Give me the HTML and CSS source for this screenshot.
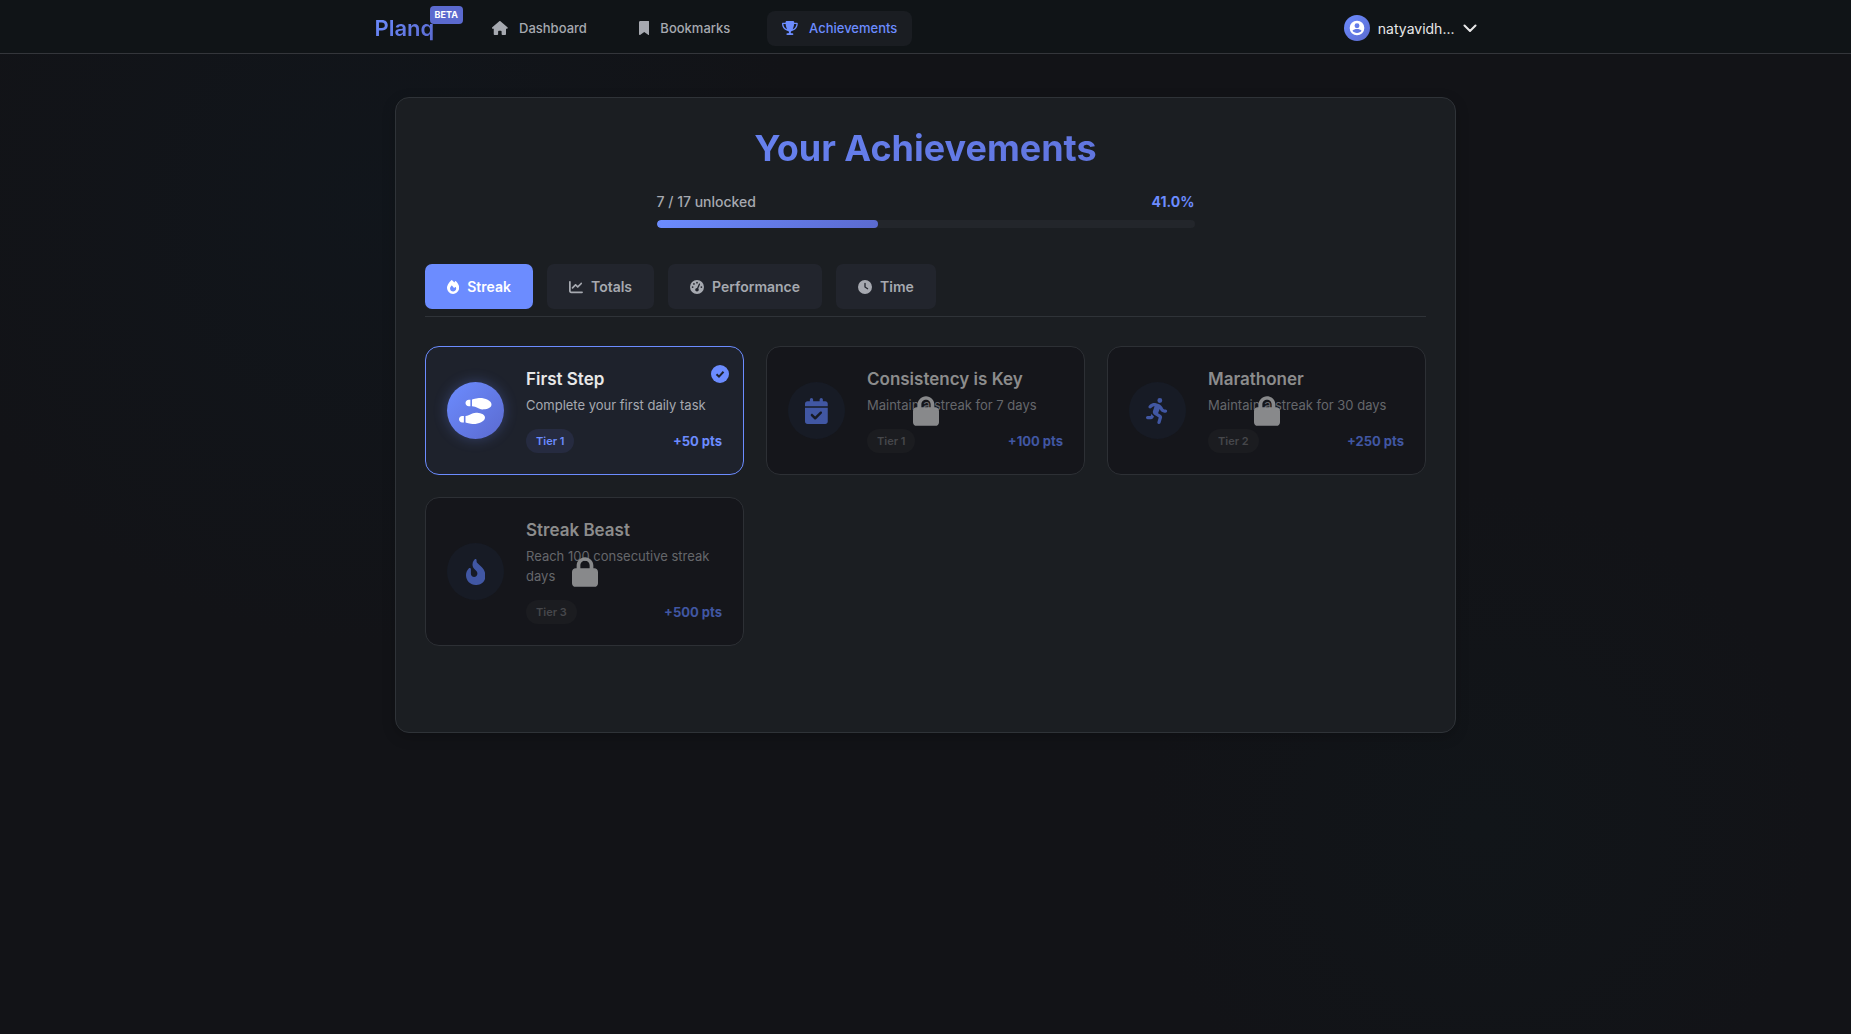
FILE: index.html
```html
<!DOCTYPE html>
<html lang="en">
<head>
<meta charset="utf-8">
<meta name="viewport" content="width=device-width, initial-scale=1">
<title>Planq – Achievements</title>
<link rel="stylesheet" href="styles.css">
</head>
<body>
<svg class="sprite" aria-hidden="true">
  <symbol id="lock" viewBox="0 0 448 512"><path d="M144 144v48H304V144c0-44.2-35.8-80-80-80s-80 35.8-80 80zM80 192V144C80 64.5 144.5 0 224 0s144 64.5 144 144v48h16c35.3 0 64 28.7 64 64V448c0 35.3-28.7 64-64 64H64c-35.3 0-64-28.7-64-64V256c0-35.3 28.7-64 64-64H80z"/></symbol>
</svg>

<header class="topbar">
  <div class="topbar-inner">
    <a class="logo" href="#"><span class="logo-text">Planq</span><span class="beta">BETA</span></a>
    <nav class="nav" aria-label="Main">
      <a class="nav-link" href="#">
        <svg class="icon" viewBox="0 0 576 512" aria-hidden="true"><path d="M575.8 255.5c0 18-15 32.1-32 32.1h-32l.7 160.2c0 2.7-.2 5.4-.5 8.1V472c0 22.1-17.9 40-40 40H456c-1.1 0-2.2 0-3.3-.1c-1.4 .1-2.8 .1-4.2 .1H416 392c-22.1 0-40-17.9-40-40V448 384c0-17.7-14.3-32-32-32H256c-17.7 0-32 14.3-32 32v64 24c0 22.1-17.9 40-40 40H160 128.1c-1.5 0-3-.1-4.5-.2c-1.2 .1-2.4 .2-3.6 .2H104c-22.1 0-40-17.9-40-40V360c0-.9 0-1.9 .1-2.8V287.6H32c-18 0-32-14-32-32.1c0-9 3-17 10-24L266.4 8c7-7 15-8 22-8s15 2 21 7L564.8 231.5c8 7 12 15 11 24z"/></svg>
        Dashboard
      </a>
      <a class="nav-link" href="#">
        <svg class="icon" viewBox="0 0 384 512" aria-hidden="true"><path d="M0 48V487.7C0 501.1 10.9 512 24.3 512c5 0 9.9-1.5 14-4.4L192 400 345.7 507.6c4.1 2.9 9 4.4 14 4.4c13.4 0 24.3-10.9 24.3-24.3V48c0-26.5-21.5-48-48-48H48C21.5 0 0 21.5 0 48z"/></svg>
        Bookmarks
      </a>
      <a class="nav-link is-active" href="#" aria-current="page">
        <svg class="icon" viewBox="0 0 576 512" aria-hidden="true"><path d="M400 0H176c-26.5 0-48.1 21.8-47.1 48.2c.2 5.3 .4 10.6 .7 15.8H24C10.7 64 0 74.7 0 88c0 92.6 33.5 157 78.5 200.7c44.3 43.1 98.3 64.8 138.1 75.8c23.4 6.5 39.4 26 39.4 45.6c0 20.9-17 37.9-37.9 37.9H192c-17.7 0-32 14.3-32 32s14.3 32 32 32H384c17.7 0 32-14.3 32-32s-14.3-32-32-32H357.9C337 448 320 431 320 410.1c0-19.6 15.9-39.2 39.4-45.6c39.9-11 93.9-32.7 138.2-75.8C542.5 245 576 180.6 576 88c0-13.3-10.7-24-24-24H446.4c.3-5.2 .5-10.4 .7-15.8C448.1 21.8 426.5 0 400 0zM48.9 112h84.4c9.1 90.1 29.2 150.3 51.9 190.6c-24.9-11-50.8-26.5-73.2-48.3c-32-31.1-58-76-63-142.3zM464.1 254.3c-22.4 21.8-48.3 37.3-73.2 48.3c22.7-40.3 42.8-100.5 51.9-190.6h84.4c-5.1 66.3-31.1 111.2-63 142.3z"/></svg>
        Achievements
      </a>
    </nav>
    <button class="user" type="button" aria-haspopup="menu">
      <span class="avatar">
        <svg viewBox="0 0 24 24" aria-hidden="true"><path fill-rule="evenodd" d="M12 1a11 11 0 1 0 0 22a11 11 0 1 0 0-22zM12 5a3.7 3.7 0 1 1 0 7.4a3.7 3.7 0 1 1 0-7.4zM12 19.5c-3 0-5.400-1.3-6.8-3.3c1-1.8 4.3-2.7 6.8-2.7s5.8.9 6.8 2.7c-1.4 2-3.8 3.3-6.8 3.3z"/></svg>
      </span>
      natyavidh...
      <svg class="chevron" viewBox="0 0 14 8" aria-hidden="true"><path d="M1.5 1.5l5.5 5.5 5.5-5.5"/></svg>
    </button>
  </div>
</header>

<main class="panel">
  <h1 class="title"><span class="title-text">Your Achievements</span></h1>

  <section class="progress" aria-label="Progress">
    <div class="progress-head"><span>7 / 17 unlocked</span><strong>41.0%</strong></div>
    <div class="progress-track"><div class="progress-fill" style="width: 41.2%"></div></div>
  </section>

  <div class="tabs" role="tablist">
    <button class="tab is-active" type="button" role="tab" aria-selected="true">
      <svg class="icon" viewBox="0 0 448 512" aria-hidden="true"><path d="M159.3 5.4c7.8-7.3 19.9-7.2 27.7 .1c27.6 25.9 53.5 53.8 77.7 84c11-14.4 23.5-30.1 37-42.9c7.9-7.4 20.1-7.4 28 .1c34.6 33 63.9 76.6 84.5 118c20.3 40.8 33.8 82.5 33.8 111.9C448 404.2 348.2 512 224 512C98.4 512 0 404.1 0 276.5c0-38.4 17.8-85.3 45.4-131.7C73.3 97.7 112.7 48.6 159.3 5.4zM225.7 416c25.3 0 47.7-7 68.8-21c42.1-29.4 53.4-88.2 28.1-134.4c-4.5-9-16-9.6-22.5-2l-25.2 29.3c-6.6 7.6-18.5 7.4-24.7-.5c-16.5-21-46-58.5-62.8-79.8c-6.3-8-18.3-8.1-24.7-.1c-33.8 42.5-50.8 69.3-50.8 99.4C112 375.4 162.6 416 225.7 416z"/></svg>
      Streak
    </button>
    <button class="tab" type="button" role="tab" aria-selected="false">
      <svg class="icon" viewBox="0 0 512 512" aria-hidden="true"><path d="M64 64c0-17.7-14.3-32-32-32S0 46.3 0 64V400c0 44.2 35.8 80 80 80H480c17.7 0 32-14.3 32-32s-14.3-32-32-32H80c-8.8 0-16-7.2-16-16V64zm406.6 86.6c12.5-12.5 12.5-32.8 0-45.3s-32.8-12.5-45.3 0L320 210.7l-57.4-57.4c-12.5-12.5-32.8-12.5-45.3 0l-112 112c-12.5 12.5-12.5 32.8 0 45.3s32.8 12.5 45.3 0L240 221.3l57.4 57.4c12.5 12.5 32.8 12.5 45.3 0l128-128z"/></svg>
      Totals
    </button>
    <button class="tab" type="button" role="tab" aria-selected="false">
      <svg class="icon" viewBox="0 0 512 512" aria-hidden="true"><path d="M0 256a256 256 0 1 1 512 0A256 256 0 1 1 0 256zM288 96a32 32 0 1 0 -64 0 32 32 0 1 0 64 0zM256 416c35.3 0 64-28.7 64-64c0-17.4-6.9-33.1-18.1-44.6L366 161.7c5.3-12.1-.2-26.3-12.3-31.6s-26.3 .2-31.6 12.3L257.9 288c-.6 0-1.3 0-1.9 0c-35.3 0-64 28.7-64 64s28.7 64 64 64zM176 144a32 32 0 1 0 -64 0 32 32 0 1 0 64 0zM96 288a32 32 0 1 0 0-64 32 32 0 1 0 0 64zm352-32a32 32 0 1 0 -64 0 32 32 0 1 0 64 0z"/></svg>
      Performance
    </button>
    <button class="tab" type="button" role="tab" aria-selected="false">
      <svg class="icon" viewBox="0 0 512 512" aria-hidden="true"><path d="M256 0a256 256 0 1 1 0 512A256 256 0 1 1 256 0zM232 120V256c0 8 4 15.5 10.7 20l96 64c11 7.4 25.9 4.4 33.3-6.7s4.4-25.9-6.7-33.3L280 243.2V120c0-13.3-10.7-24-24-24s-24 10.7-24 24z"/></svg>
      Time
    </button>
  </div>

  <div class="grid">
    <article class="card is-unlocked">
      <div class="badge"><svg class="icon" viewBox="0 0 640 512" aria-hidden="true"><path d="M416 0C352.3 0 256 32 256 32V160c48 0 76 16 104 32s56 32 104 32c56.4 0 176-16 176-96S512 0 416 0zM128 96c0 35.3 28.7 64 64 64h32V32H192c-35.3 0-64 28.7-64 64zM288 512c96 0 224-48 224-128s-119.6-96-176-96c-48 0-76 16-104 32s-56 32-104 32V480s96.3 32 160 32zM0 416c0 35.3 28.7 64 64 64H96V352H64c-35.3 0-64 28.7-64 64z"/></svg></div>
      <div class="body">
        <h2 class="name">First Step</h2>
        <p class="desc">Complete your first daily task</p>
        <div class="meta"><span class="tier">Tier 1</span><span class="points">+50 pts</span></div>
      </div>
      <svg class="done" viewBox="0 0 18 18" role="img" aria-label="Unlocked"><circle cx="9" cy="9" r="9"/><path d="M5.5 9.2l2.5 2.4 4.5-4.8"/></svg>
    </article>

    <article class="card">
      <div class="badge"><svg class="icon" viewBox="0 0 448 512" aria-hidden="true"><path d="M128 0c17.7 0 32 14.3 32 32V64H288V32c0-17.7 14.3-32 32-32s32 14.3 32 32V64h48c26.5 0 48 21.5 48 48v48H0V112C0 85.5 21.5 64 48 64H96V32c0-17.7 14.3-32 32-32zM0 192H448V464c0 26.5-21.5 48-48 48H48c-26.5 0-48-21.5-48-48V192zM329 305c9.4-9.4 9.4-24.6 0-33.9s-24.6-9.4-33.9 0l-95 95-47-47c-9.4-9.4-24.6-9.4-33.9 0s-9.4 24.6 0 33.9l64 64c9.4 9.4 24.6 9.4 33.9 0L329 305z"/></svg></div>
      <div class="body">
        <h2 class="name">Consistency is Key</h2>
        <p class="desc">Maintain a streak for 7 days</p>
        <div class="meta"><span class="tier">Tier 1</span><span class="points">+100 pts</span></div>
      </div>
      <div class="overlay"><svg class="lock" role="img" aria-label="Locked"><use href="#lock"/></svg></div>
    </article>

    <article class="card">
      <div class="badge"><svg class="icon" viewBox="0 0 448 512" aria-hidden="true"><path d="M320 48a48 48 0 1 0 -96 0 48 48 0 1 0 96 0zM125.7 175.5c9.9-9.9 23.4-15.5 37.5-15.5c1.9 0 3.8 .1 5.6 .3L137.6 254c-9.3 28 1.7 58.8 26.8 74.5l86.2 53.9-25.4 88.8c-4.9 17 5 34.7 22 39.6s34.7-5 39.6-22l28.7-100.4c5.9-20.6-2.6-42.6-20.7-53.9L238 299l30.9-82.4 5.1 12.3C289 264.7 323.9 288 362.7 288H384c17.7 0 32-14.3 32-32s-14.3-32-32-32H362.7c-12.9 0-24.6-7.8-29.5-19.7l-6.3-15c-14.6-35.1-44.1-61.9-80.5-73.1l-48.7-15c-11.1-3.4-22.7-5.2-34.4-5.2c-31 0-60.8 12.3-82.7 34.3L57.4 153.4c-12.5 12.5-12.5 32.8 0 45.3s32.8 12.5 45.3 0l23.1-23.1zM91.2 352H32c-17.7 0-32 14.3-32 32s14.3 32 32 32h69.6c19 0 36.2-11.2 43.9-28.5L157 361.6l-9.5-6c-17.5-10.9-30.5-26.8-37.9-44.9L91.2 352z"/></svg></div>
      <div class="body">
        <h2 class="name">Marathoner</h2>
        <p class="desc">Maintain a streak for 30 days</p>
        <div class="meta"><span class="tier">Tier 2</span><span class="points">+250 pts</span></div>
      </div>
      <div class="overlay"><svg class="lock" role="img" aria-label="Locked"><use href="#lock"/></svg></div>
    </article>

    <article class="card">
      <div class="badge"><svg class="icon" viewBox="0 0 384 512" aria-hidden="true"><path d="M153.6 29.9l16-21.3C173.6 3.2 180 0 186.7 0C198.4 0 208 9.6 208 21.3V43.5c0 13.1 5.4 25.7 14.9 34.7L307.6 159C356.4 205.6 384 270.2 384 337.7C384 434 306 512 209.7 512H192C86 512 0 426 0 320v-3.8c0-48.8 19.4-95.6 53.9-130.1l3.5-3.5c4.2-4.2 10-6.6 16-6.6C85.9 176 96 186.1 96 198.6V288c0 35.3 28.7 64 64 64s64-28.7 64-64v-3.9c0-18-7.2-35.3-19.9-48l-38.6-38.6c-24-24-37.5-56.7-37.5-90.7c0-27.7 9-54.8 25.6-76.9z"/></svg></div>
      <div class="body">
        <h2 class="name">Streak Beast</h2>
        <p class="desc">Reach 100 consecutive streak days</p>
        <div class="meta"><span class="tier">Tier 3</span><span class="points">+500 pts</span></div>
      </div>
      <div class="overlay"><svg class="lock" role="img" aria-label="Locked"><use href="#lock"/></svg></div>
    </article>
  </div>
</main>
</body>
</html>
```
FILE: styles.css
```css
:root {
  --accent: #6c8cff;
  --accent-deep: #5b6acf;
  --gradient: linear-gradient(135deg, var(--accent), var(--accent-deep));
  --text: #e8e8e8;
  --muted: #a6a9b0;
  --panel: #1b1e22;
  --line: #2f3338;
}

* { box-sizing: border-box; }

body {
  margin: 0;
  min-height: 100vh;
  background:
    radial-gradient(circle at 20% 20%, rgba(16, 23, 30, 0.6), transparent 440px),
    radial-gradient(circle at 80% 80%, rgba(16, 23, 27, 0.5), transparent 340px),
    #121317;
  color: var(--text);
  font-family: Inter, "Liberation Sans", sans-serif;
  font-size: 14px;
}

h1, h2, p { margin: 0; }
button { font: inherit; border: 0; cursor: pointer; }
a { text-decoration: none; }
.sprite { display: none; }
.icon { height: 14px; fill: currentColor; flex: none; }

/* Top bar */
.topbar {
  background: #101417;
  border-bottom: 1px solid #34363b;
}
.topbar-inner {
  display: flex;
  align-items: center;
  max-width: 1102px;
  height: 53px;
  margin: 0 auto;
  padding-top: 3px;
}
.logo {
  position: relative;
  margin-right: 43px;
  font-size: 22px;
  font-weight: 600;
  line-height: 28px;
}
.logo-text,
.title-text {
  background: var(--gradient);
  -webkit-background-clip: text;
  background-clip: text;
  color: transparent;
}
.title-text { display: block; }
.beta {
  position: absolute;
  left: 55px;
  top: -8px;
  padding: 0 5px;
  border-radius: 4px;
  background: var(--accent-deep);
  color: #fff;
  font-size: 9px;
  font-weight: 700;
  line-height: 18px;
}
.nav { display: flex; gap: 22px; }
.nav-link {
  display: flex;
  align-items: center;
  gap: 11px;
  height: 35px;
  padding: 0 15px;
  border-radius: 8px;
  color: var(--muted);
  font-size: 13px;
  font-weight: 500;
}
.nav-link.is-active { background: #1a1d22; color: var(--accent); }
.user {
  display: flex;
  align-items: center;
  gap: 8px;
  margin-left: auto;
  padding: 0;
  background: none;
  color: var(--text);
}
.avatar {
  display: grid;
  place-items: center;
  width: 26px;
  height: 26px;
  border-radius: 50%;
  background: var(--gradient);
}
.avatar svg { width: 16px; height: 16px; fill: #fff; }
.chevron {
  width: 14px;
  height: 8px;
  fill: none;
  stroke: currentColor;
  stroke-width: 2;
  stroke-linecap: round;
  stroke-linejoin: round;
}

/* Panel */
.panel {
  max-width: 1061px;
  min-height: 636px;
  margin: 43px auto 0;
  padding: 28px 29px;
  border: 1px solid var(--line);
  border-radius: 14px;
  background: var(--panel);
  box-shadow: 0 4px 14px rgba(0, 0, 0, 0.2);
}
.title {
  font-size: 36px;
  font-weight: 700;
  line-height: 44px;
  text-align: center;
}
.progress { max-width: 538px; margin: 22px auto 36px; }
.progress-head {
  display: flex;
  justify-content: space-between;
  margin-bottom: 8px;
  color: var(--muted);
  line-height: 20px;
  font-weight: 500;
}
.progress-head strong { color: var(--accent); font-weight: 700; }
.progress-track {
  height: 8px;
  border-radius: 4px;
  background: #23262b;
  overflow: hidden;
}
.progress-fill { height: 100%; border-radius: 4px; background: var(--gradient); }

.tabs {
  display: flex;
  gap: 14px;
  padding-bottom: 7px;
  border-bottom: 1px solid var(--line);
}
.tab {
  display: flex;
  align-items: center;
  gap: 8px;
  height: 45px;
  padding: 0 22px;
  border-radius: 7px;
  background: #22252d;
  color: var(--muted);
  font-weight: 600;
}
.tab.is-active { background: var(--accent); color: #fff; }

/* Cards */
.grid {
  display: grid;
  grid-template-columns: repeat(3, 1fr);
  gap: 22px;
  margin-top: 29px;
}
.card {
  position: relative;
  display: flex;
  align-items: center;
  gap: 22px;
  padding: 21px;
  border: 1px solid #2d3035;
  border-radius: 14px;
  background: #15161b;
}
.card.is-unlocked { border-color: var(--accent); background: #1e222c; }
.badge {
  display: grid;
  place-items: center;
  flex: none;
  width: 57px;
  height: 57px;
  border-radius: 50%;
  background: #171b25;
  color: #4157a3;
}
.badge .icon { height: 26px; }
.is-unlocked .badge {
  background: var(--gradient);
  color: #fff;
  box-shadow: 0 0 14px rgba(108, 140, 255, 0.3);
}
.body { flex: 1; min-width: 0; }
.name { color: #8c8c8c; font-size: 17px; font-weight: 600; line-height: 22px; }
.desc { margin: 5px 0 14px; color: #65676b; font-size: 13px; line-height: 20px; }
.is-unlocked .name { color: var(--text); }
.is-unlocked .desc { color: var(--muted); }
.meta { display: flex; align-items: center; justify-content: space-between; }
.tier {
  padding: 0 10px;
  border-radius: 12px;
  background: #1b1c20;
  color: #46474b;
  font-size: 11px;
  font-weight: 600;
  line-height: 24px;
}
.is-unlocked .tier { background: #262b40; color: var(--accent); }
.points { color: #4157a3; font-size: 13px; font-weight: 700; }
.is-unlocked .points { color: var(--accent); }
.done { position: absolute; top: 18px; right: 14px; width: 18px; height: 18px; }
.done circle { fill: var(--accent); }
.done path { fill: none; stroke: #1e222c; stroke-width: 2; }
.overlay {
  position: absolute;
  inset: 0;
  display: grid;
  place-items: center;
}
.lock { width: 26px; height: 30px; fill: #8f9092; opacity: 0.95; }

@media (max-width: 1100px) {
  .topbar-inner { padding: 3px 16px 0; }
  .grid { grid-template-columns: repeat(auto-fill, minmax(290px, 1fr)); }
}
```
